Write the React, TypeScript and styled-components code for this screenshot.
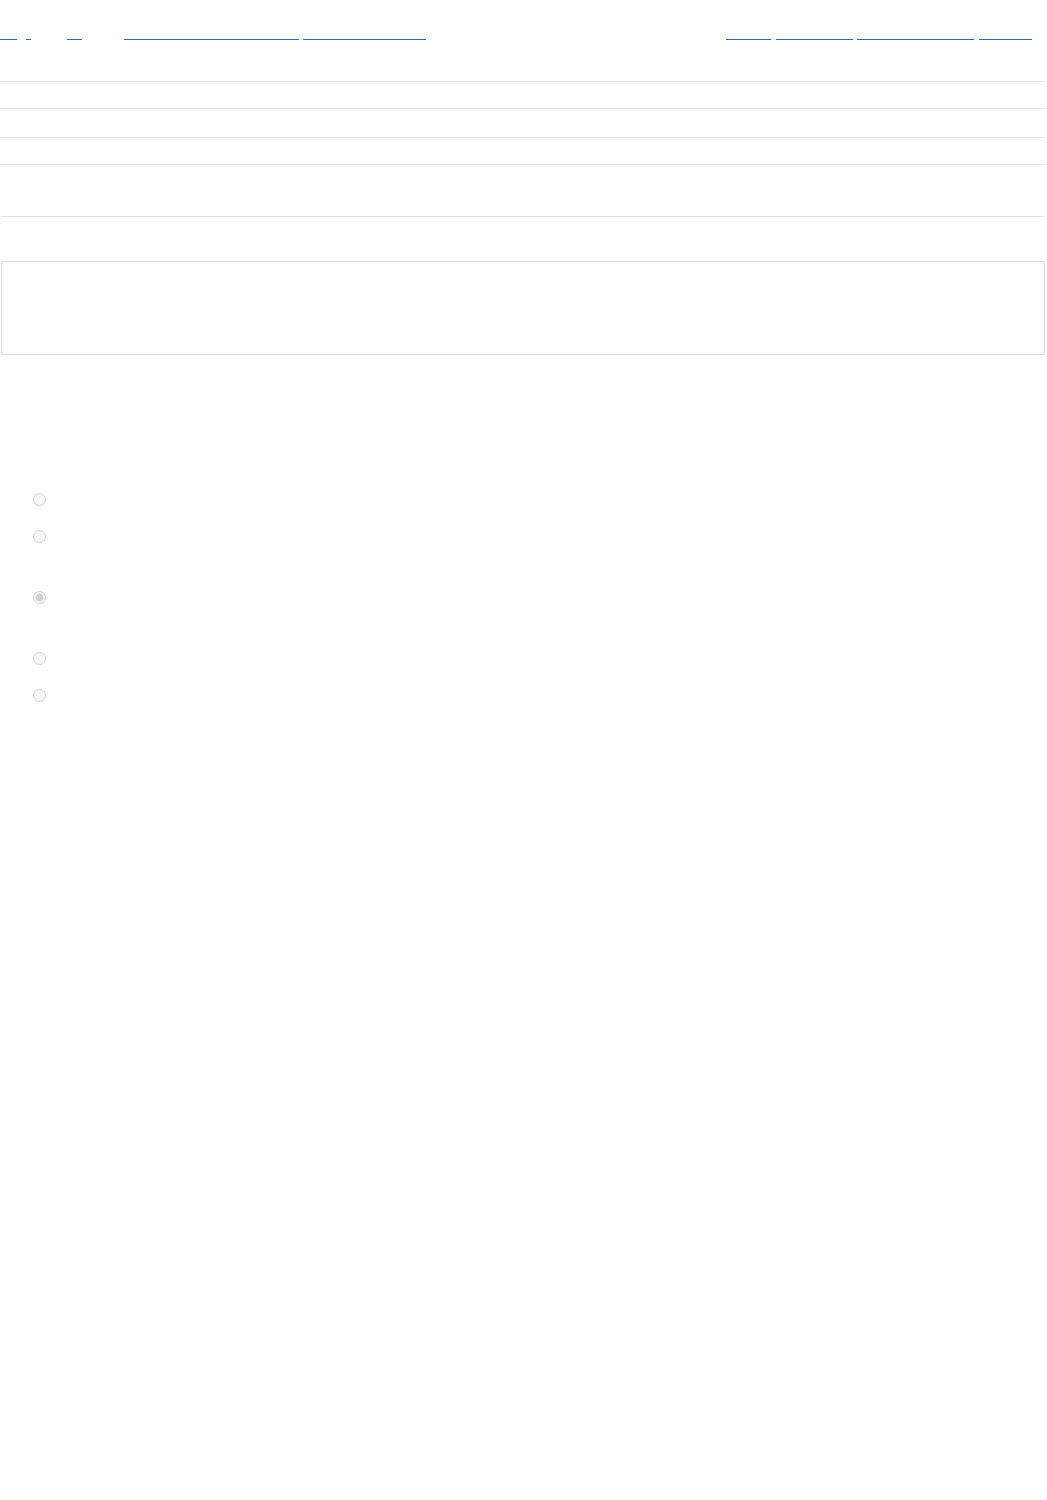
import React from 'react';
import styled, {createGlobalStyle} from "styled-components";

const GlobalStyle = createGlobalStyle`
  body {
    margin: 0;
    background: #ffffff;
    font-family: "Liberation Sans", Arial, sans-serif;
  }
`

type navItem = { label: string, width: number, gap: number }

// link texts are rendered invisible in the reference, only the underline shows
const leftNav: navItem[] = [
    {label: "Hi", width: 17, gap: 0},
    {label: "·", width: 5, gap: 9},
    {label: "Go", width: 15, gap: 36},
    {label: "Getting started with the project", width: 175, gap: 42},
    {label: "Release notes", width: 123, gap: 4},
]

const rightNav: navItem[] = [
    {label: "Blog", width: 45, gap: 0},
    {label: "Community", width: 77, gap: 5},
    {label: "Documentation", width: 117, gap: 4},
    {label: "Login", width: 53, gap: 5},
]

const rows = [27, 29, 27, 52]

const options = [
    {height: 37, checked: false},
    {height: 61, checked: false},
    {height: 61, checked: true},
    {height: 37, checked: false},
    {height: 37, checked: false},
]

const App = () => {
    return (
        <>
            <GlobalStyle/>
            <PageStyled>
                <HeaderStyled>
                    <NavStyled>
                        {leftNav.map((n) => (
                            <NavLinkStyled key={n.label} href="#" $width={n.width} $gap={n.gap}>{n.label}</NavLinkStyled>
                        ))}
                    </NavStyled>
                    <NavStyled>
                        {rightNav.map((n) => (
                            <NavLinkStyled key={n.label} href="#" $width={n.width} $gap={n.gap}>{n.label}</NavLinkStyled>
                        ))}
                    </NavStyled>
                </HeaderStyled>

                <TableStyled>
                    {rows.map((h, i) => (
                        <RowStyled key={i} $height={h}/>
                    ))}
                </TableStyled>

                <BoxStyled/>

                <OptionListStyled>
                    {options.map((o, i) => (
                        <OptionStyled key={i} $height={o.height}>
                            <RadioStyled type="radio" name="choice" disabled defaultChecked={o.checked}/>
                        </OptionStyled>
                    ))}
                </OptionListStyled>
            </PageStyled>
        </>
    );
};

export default App;

const PageStyled = styled.div`
  width: 1047px;
  min-height: 1500px;
  background: #ffffff;
`

const HeaderStyled = styled.header`
  display: flex;
  justify-content: space-between;
  height: 81px;
  padding-right: 15px;
  box-sizing: border-box;
`

const NavStyled = styled.nav`
  display: flex;
  align-items: flex-start;
`

const NavLinkStyled = styled.a<{ $width: number, $gap: number }>`
  display: block;
  width: ${p => p.$width}px;
  height: 39px;
  margin-left: ${p => p.$gap}px;
  border-bottom: 1px solid #2a68a6;
  color: transparent;
  font-size: 10px;
  line-height: 60px;
  overflow: hidden;
  white-space: nowrap;
  text-decoration: none;
`

const TableStyled = styled.div`
  margin-left: 1px;
  width: 1044px;
  border-bottom: 1px solid #e2e1e6;
`

const RowStyled = styled.div<{ $height: number }>`
  height: ${p => p.$height - 1}px;
  border-top: 1px solid #e2e1e6;
`

const BoxStyled = styled.div`
  margin: 44px 0 0 1px;
  width: 1044px;
  height: 94px;
  box-sizing: border-box;
  border: 1px solid #d4d7df;
  border-radius: 2px;
`

const OptionListStyled = styled.div`
  margin-top: 138px;
  padding-left: 33px;
`

const OptionStyled = styled.label<{ $height: number }>`
  display: flex;
  align-items: flex-start;
  height: ${p => p.$height}px;
`

const RadioStyled = styled.input`
  margin: 0;
  width: 13px;
  height: 13px;
`
